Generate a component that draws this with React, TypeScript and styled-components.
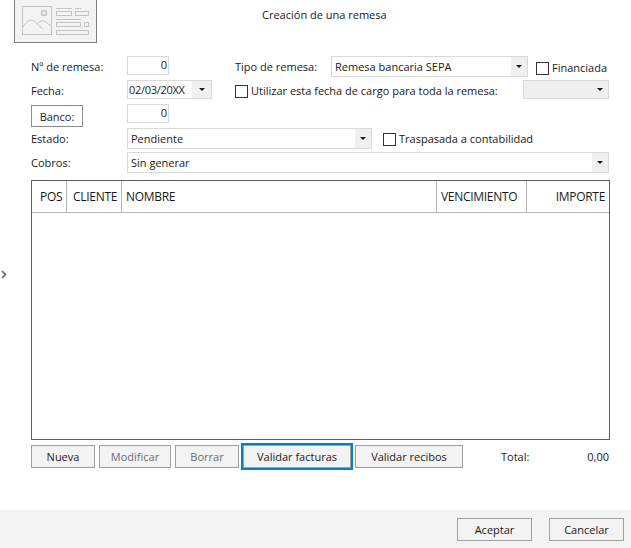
import React from 'react';
import styled, {createGlobalStyle} from 'styled-components';

const GlobalStyle = createGlobalStyle`
  html, body {
    margin: 0;
    padding: 0;
    background: #ffffff;
  }
  body {
    font-family: "Open Sans", "Noto Sans", sans-serif;
    font-size: 11px;
    color: #1a1a1a;
  }
`

const Page = styled.div`
  position: relative;
  width: 631px;
  height: 548px;
  overflow: hidden;
  display: flex;
  flex-direction: column;
`

const Header = styled.div`
  height: 43px;
  display: flex;
  padding-left: 14px;
`

const Thumb = styled.div`
  width: 81px;
  height: 42px;
  background: #f3f3f3;
  border: 1px solid #808080;
  border-top: 0;
`

const Title = styled.div`
  margin-left: 165px;
  padding-top: 7px;
  line-height: 16px;
`

const Form = styled.div`
  padding: 11px 0 0 31px;
  display: flex;
  flex-direction: column;
`

const Row = styled.div<{$h: number}>`
  display: flex;
  align-items: center;
  height: ${props => props.$h}px;
`

const Label = styled.div<{$w: number; $mt?: number; $ml?: number}>`
  width: ${props => props.$w}px;
  margin-top: ${props => props.$mt ?? 0}px;
  margin-left: ${props => props.$ml ?? 0}px;
  flex: none;
  line-height: 16px;
  white-space: nowrap;
`

const NumberInput = styled.div`
  box-sizing: border-box;
  width: 42px;
  height: 19px;
  border: 1px solid #d9d9d9;
  text-align: right;
  padding-right: 1px;
  line-height: 15px;
  flex: none;
`

const Select = styled.div<{$w: number; $h?: number; $mt?: number; $bg?: string}>`
  box-sizing: border-box;
  width: ${props => props.$w}px;
  height: ${props => props.$h ?? 21}px;
  margin-top: ${props => props.$mt ?? 0}px;
  border: 1px solid #d9d9d9;
  background: ${props => props.$bg || '#ffffff'};
  display: flex;
  align-items: center;
  flex: none;
`

const SideSelect = styled(Select)`
  margin-left: auto;
  margin-right: 22px;
`

const SelectText = styled.div<{$pad?: number; $tight?: boolean}>`
  flex: 1;
  padding-left: ${props => props.$pad ?? 3}px;
  line-height: 15px;
  white-space: nowrap;
  letter-spacing: ${props => props.$tight ? '-0.3px' : 'normal'};
`

const Arrow = styled.div<{$w?: number}>`
  width: ${props => props.$w ?? 16}px;
  height: 100%;
  background: #f0f0f0;
  display: flex;
  align-items: center;
  justify-content: center;
  flex: none;
  &::after {
    content: "";
    border-left: 3px solid transparent;
    border-right: 3px solid transparent;
    border-top: 3px solid #1a1a1a;
  }
`

const Check = styled.label<{$ml: number; $mt: number}>`
  display: flex;
  align-items: center;
  margin-left: ${props => props.$ml}px;
  margin-top: ${props => props.$mt}px;
  white-space: nowrap;
  line-height: 16px;
  flex: none;
  &::before {
    content: "";
    box-sizing: border-box;
    width: 13px;
    height: 13px;
    border: 1px solid #333333;
    background: #ffffff;
    margin-right: 3px;
  }
`

const Button = styled.button<{$w: number; $disabled?: boolean; $focused?: boolean}>`
  box-sizing: border-box;
  width: ${props => props.$w}px;
  height: 23px;
  flex: none;
  margin: 0;
  padding: 0;
  font: inherit;
  background: #f3f3f3;
  color: ${props => props.$disabled ? '#6d6d6d' : '#1a1a1a'};
  border: 1px solid #a0a0a0;
  outline: ${props => props.$focused ? '2px solid #0082c6' : 'none'};
`

const BancoButton = styled(Button)`
  height: 22px;
  margin: 5px 44px 0 0;
  background: #ffffff;
  border-color: #8c8c8c;
`

const Table = styled.div`
  box-sizing: border-box;
  width: 579px;
  height: 260px;
  margin: 7px 0 0 31px;
  border: 1px solid #5f5f5f;
`

const TableHead = styled.div`
  height: 32px;
  box-sizing: border-box;
  border-bottom: 1px solid #b5b5b5;
  display: flex;
`

const HeadCell = styled.div<{$w: number; $pad: number; $align?: string}>`
  box-sizing: border-box;
  width: ${props => props.$w}px;
  flex: none;
  padding: 8px 4px 0 ${props => props.$pad}px;
  font-size: 12px;
  line-height: 16px;
  letter-spacing: -0.3px;
  text-align: ${props => props.$align || 'left'};
  border-right: 1px solid #b5b5b5;
  white-space: nowrap;
  &:last-child {
    border-right: 0;
  }
`

const Actions = styled.div`
  display: flex;
  align-items: center;
  height: 23px;
  margin: 5px 0 0 31px;
`

const ActionGap = styled.div<{$w: number}>`
  width: ${props => props.$w}px;
  flex: none;
`

const TotalValue = styled.div`
  width: 80px;
  text-align: right;
  line-height: 16px;
`

const Footer = styled.div`
  margin-top: auto;
  height: 38px;
  background: #f3f3f3;
  display: flex;
  justify-content: flex-end;
  align-items: flex-start;
  gap: 17px;
  padding: 8px 7px 0 0;
  box-sizing: border-box;
`

const Handle = styled.svg`
  position: absolute;
  left: 1px;
  top: 270px;
`

const ThumbSvg = styled.svg`
  display: block;
`

const ThumbIcon: React.FC = () => (
    <ThumbSvg width="81" height="42" viewBox="15 0 81 42" fill="none" stroke="#c4c4c4" strokeWidth="1">
        <rect x="22.5" y="6.5" width="29" height="28" />
        <circle cx="44" cy="13" r="2.5" strokeWidth="1.4" />
        <path d="M23 27 C27 20 31 18 35 22 L43 29 M37 24 C41 20 44 20 47 23 L51 26" />
        <path d="M56 8.5H72M75 8.5H81" />
        <rect x="56.5" y="11.5" width="15" height="4" />
        <rect x="75.5" y="11.5" width="13" height="4" />
        <path d="M56 19.5H81" />
        <rect x="56.5" y="22.5" width="24" height="4" />
        <rect x="84.5" y="22.5" width="4" height="4" />
        <rect x="56.5" y="30.5" width="32" height="4" />
    </ThumbSvg>
)

const columns = [
    {name: 'POS', w: 35, pad: 8},
    {name: 'CLIENTE', w: 55, pad: 6},
    {name: 'NOMBRE', w: 315, pad: 4},
    {name: 'VENCIMIENTO', w: 90, pad: 4},
    {name: 'IMPORTE', w: 82, pad: 4, align: 'right'},
]

const App: React.FC = () => {
    return (
        <Page>
            <GlobalStyle />
            <Header>
                <Thumb><ThumbIcon /></Thumb>
                <Title>Creación de una remesa</Title>
            </Header>
            <Form>
                <Row $h={23}>
                    <Label $w={96} $mt={3}>Nº de remesa:</Label>
                    <NumberInput>0</NumberInput>
                    <Label $w={96} $ml={66} $mt={3}>Tipo de remesa:</Label>
                    <Select $w={197} $mt={2}>
                        <SelectText>Remesa bancaria SEPA</SelectText>
                        <Arrow />
                    </Select>
                    <Check $ml={8} $mt={5}>Financiada</Check>
                </Row>
                <Row $h={25}>
                    <Label $w={96} $mt={3}>Fecha:</Label>
                    <Select $w={85} $h={19}>
                        <SelectText $pad={1} $tight>02/03/20XX</SelectText>
                        <Arrow $w={19} />
                    </Select>
                    <Check $ml={23} $mt={3}>Utilizar esta fecha de cargo para toda la remesa:</Check>
                    <SideSelect $w={86} $h={19} $bg="#f0f0f0">
                        <SelectText />
                        <Arrow />
                    </SideSelect>
                </Row>
                <Row $h={23}>
                    <BancoButton $w={52}>Banco:</BancoButton>
                    <NumberInput>0</NumberInput>
                </Row>
                <Row $h={27}>
                    <Label $w={96}>Estado:</Label>
                    <Select $w={245}>
                        <SelectText>Pendiente</SelectText>
                        <Arrow />
                    </Select>
                    <Check $ml={11} $mt={1}>Traspasada a contabilidad</Check>
                </Row>
                <Row $h={21}>
                    <Label $w={96} $mt={1}>Cobros:</Label>
                    <Select $w={482}>
                        <SelectText>Sin generar</SelectText>
                        <Arrow />
                    </Select>
                </Row>
            </Form>
            <Table>
                <TableHead>
                    {columns.map(col => (
                        <HeadCell key={col.name} $w={col.w} $pad={col.pad} $align={col.align}>{col.name}</HeadCell>
                    ))}
                </TableHead>
            </Table>
            <Actions>
                <Button $w={64}>Nueva</Button>
                <ActionGap $w={4} />
                <Button $w={72} $disabled>Modificar</Button>
                <ActionGap $w={4} />
                <Button $w={64} $disabled>Borrar</Button>
                <ActionGap $w={4} />
                <Button $w={108} $focused>Validar facturas</Button>
                <ActionGap $w={4} />
                <Button $w={108}>Validar recibos</Button>
                <ActionGap $w={38} />
                <Label $w={28}>Total:</Label>
                <TotalValue>0,00</TotalValue>
            </Actions>
            <Footer>
                <Button $w={75}>Aceptar</Button>
                <Button $w={75}>Cancelar</Button>
            </Footer>
            <Handle width="6" height="9" viewBox="0 0 6 9" fill="none" stroke="#666666" strokeWidth="1.6">
                <path d="M1 1l3.5 3.5L1 8" />
            </Handle>
        </Page>
    );
};

export default App;
